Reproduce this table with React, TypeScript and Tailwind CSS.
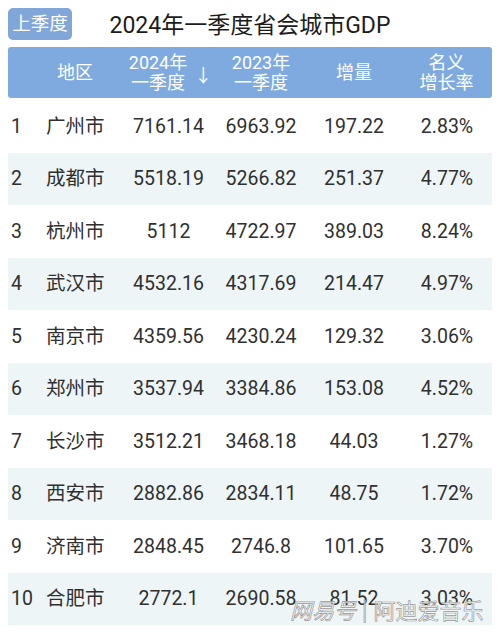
import React from "react";

const rows: [string, string, string, string, string, string][] = [
  ["1", "广州市", "7161.14", "6963.92", "197.22", "2.83%"],
  ["2", "成都市", "5518.19", "5266.82", "251.37", "4.77%"],
  ["3", "杭州市", "5112", "4722.97", "389.03", "8.24%"],
  ["4", "武汉市", "4532.16", "4317.69", "214.47", "4.97%"],
  ["5", "南京市", "4359.56", "4230.24", "129.32", "3.06%"],
  ["6", "郑州市", "3537.94", "3384.86", "153.08", "4.52%"],
  ["7", "长沙市", "3512.21", "3468.18", "44.03", "1.27%"],
  ["8", "西安市", "2882.86", "2834.11", "48.75", "1.72%"],
  ["9", "济南市", "2848.45", "2746.8", "101.65", "3.70%"],
  ["10", "合肥市", "2772.1", "2690.58", "81.52", "3.03%"],
];

const grid = "grid grid-cols-[32px_82px_93px_92px_94px_91px]";

export default function App() {
  return (
    <div className="relative w-[500px] h-[634px] overflow-hidden bg-white font-['Roboto','Noto_Sans_CJK_SC',sans-serif]">
      <div className="grid grid-cols-[1fr_auto_1fr] items-start h-[47px] px-2 pt-2">
        <div className="flex">
          <div className="w-[64px] h-[32px] rounded-[5px] bg-[#80a6da] text-white text-[18.5px] leading-[32px] text-center">
            上季度
          </div>
        </div>
        <div className="text-[23px] leading-[34px] text-[#1c1c1c] pt-[1px]">2024年一季度省会城市GDP</div>
        <div />
      </div>

      <div className="px-2">
        <div className={`${grid} h-[51px] bg-[#7faadf] rounded-[3px] text-white text-[18px] leading-[20px] items-center`}>
          <div />
          <div className="pl-[17px]">地区</div>
          <div className="flex items-center justify-center gap-[7px] pl-[4px]">
            <div className="text-center">
              <div>2024年</div>
              <div>一季度</div>
            </div>
            <div className="text-[18px] pt-[6px]">↓</div>
          </div>
          <div className="text-center">
            <div>2023年</div>
            <div>一季度</div>
          </div>
          <div className="text-center">增量</div>
          <div className="text-center">
            <div>名义</div>
            <div>增长率</div>
          </div>
        </div>

        <div className="pt-[2px]">
          {rows.map((r, i) => (
            <div
              key={r[0]}
              className={`${grid} h-[52.5px] items-center text-[19.5px] text-[#303030] ${i % 2 === 1 ? "bg-[#edf5f6]" : "bg-white"}`}
            >
              <div className="pl-[3px]">{r[0]}</div>
              <div className="pl-[6px]">{r[1]}</div>
              <div className="text-center">{r[2]}</div>
              <div className="text-center">{r[3]}</div>
              <div className="text-center">{r[4]}</div>
              <div className="text-center pl-[1px]">{r[5]}</div>
            </div>
          ))}
        </div>
      </div>

      <div className="absolute left-[290px] top-[596px] flex items-center text-[22px] leading-[26px] text-white/85 [-webkit-text-stroke:0.7px_#9a9a9a] font-['Noto_Sans_CJK_SC',sans-serif] whitespace-nowrap">
        <span className="italic">网易号</span>
        <span className="px-[6px] text-[20px]">|</span>
        <span>阿迪爱音乐</span>
      </div>
    </div>
  );
}
